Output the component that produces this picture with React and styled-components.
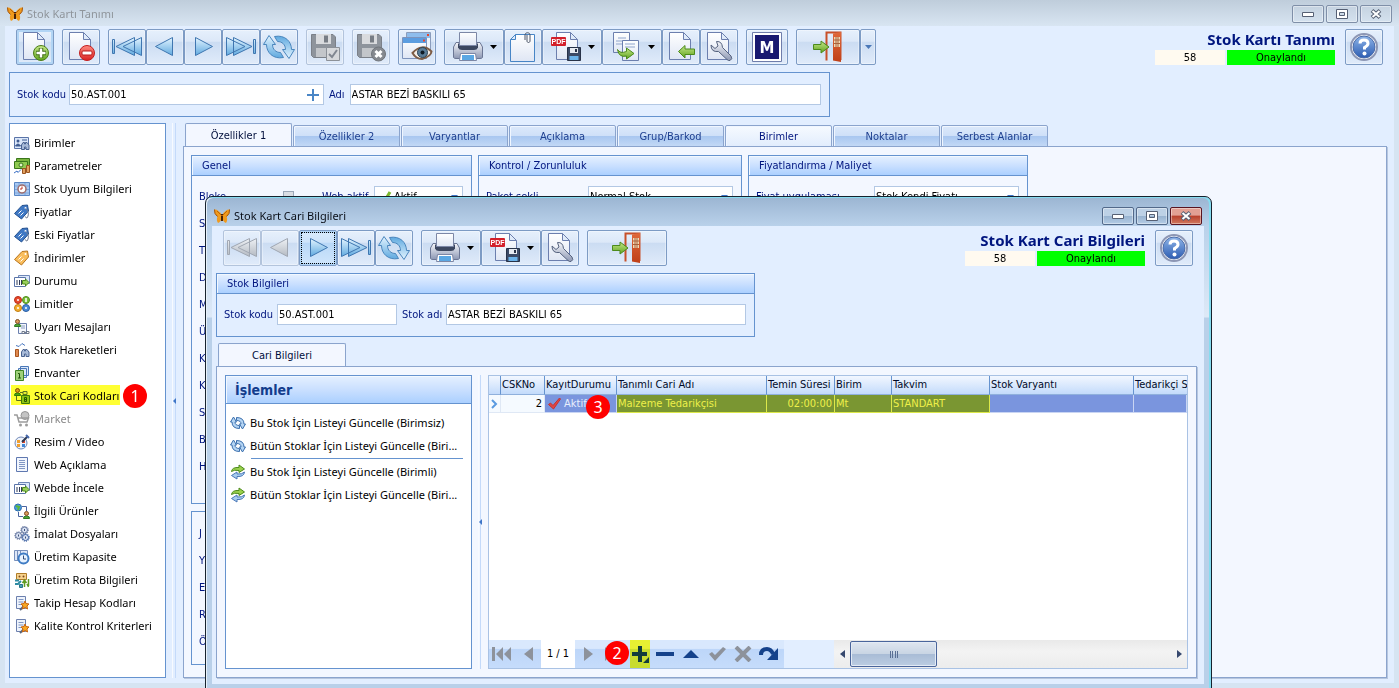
import React, { useState } from 'react';
import styled, { createGlobalStyle, css } from 'styled-components';

const GlobalStyle = createGlobalStyle`
  * {
    box-sizing: border-box;
  }
  html, body, #root {
    height: 100%;
  }
  body {
    --form: 'DejaVu Sans Condensed', 'Noto Sans', sans-serif;
    --list: 'Noto Sans', 'Open Sans', sans-serif;
    --line: #6593cf;
    --navy: #00157f;
    margin: 0;
    overflow: hidden;
    font: 11px/16px var(--form);
    color: var(--navy);
  }
  button, input, select {
    font: inherit;
    color: inherit;
    margin: 0;
    padding: 0;
    border: 0;
    background: none;
  }
  svg {
    display: block;
    flex: none;
  }
`;

/* ---------- windows ---------- */

const MainWindow = styled.div`
  position: relative;
  display: flex;
  flex-direction: column;
  height: 100%;
  padding: 0 5px 5px;
  background: #d6e4f2;
  overflow: hidden;
`;

const TitleBar = styled.header`
  display: flex;
  align-items: center;
  gap: 4px;
  height: 26px;
  margin: 0 -5px;
  padding: 2px 7px 0 7px;
  font: 11px/16px var(--list);
  color: #8f959b;
  background: linear-gradient(#bfcddb, #d8e5f2);
`;

const Client = styled.main`
  flex: 1;
  min-height: 0;
  display: flex;
  flex-direction: column;
  background: #e2eeff;
`;

const Dialog = styled.section`
  position: absolute;
  top: 196px;
  left: 205px;
  right: 187px;
  bottom: -4px;
  display: flex;
  flex-direction: column;
  padding: 0 7px 7px 6px;
  border: 1px solid #16222e;
  border-radius: 7px 7px 0 0;
  background: linear-gradient(#9bb5d2, #b9d1ea 29px, #dde9f7 120px, #b9d0e9 121px);
  box-shadow: inset -2px 1px 0 #86dcf0, inset 1px 1px 0 #e8f1fa;

  ${TitleBar} {
    height: 29px;
    margin: 0 -7px 0 -6px;
    padding: 8px 9px 0 8px;
    color: #0a0f18;
    background: none;
  }
`;

const Caption = styled.span`
  flex: 1;
`;

const WindowButtons = styled.div`
  display: flex;
  gap: 2px;
`;

const WindowButton = styled.button`
  display: grid;
  place-items: center;
  width: 32px;
  height: 18px;
  border: 1px solid #7f8fa8;
  border-radius: 2px;
  box-shadow: inset 0 0 0 1px rgba(255, 255, 255, 0.4);
  ${(props) => props.$strong && css`
    border-color: #52698a;
    background: linear-gradient(#bdd1e6 48%, #98b3d0 50%, #b4cce6);
  `}
  ${(props) => props.$red && css`
    border-color: #5a1420;
    background: linear-gradient(#e2a094 45%, #b8402c 50%, #d17a60);
  `}
`;

/* ---------- toolbar ---------- */

const Toolbar = styled.div`
  display: flex;
  align-items: flex-start;
  gap: 8px;
  padding: ${(props) => (props.$inner ? '4px 11px 7px' : '3px 11px 7px')};
`;

const Group = styled.div`
  display: flex;
`;

const ToolButton = styled.button`
  display: flex;
  align-items: center;
  justify-content: center;
  gap: 6px;
  width: ${(props) => props.$width || 38}px;
  height: 36px;
  border: 1px solid #7d9bc4;
  border-radius: 2px;
  background: linear-gradient(#e6f0fc, #dce8f8 33%, #cbdcf2 36%, #e0ebfa);
  box-shadow: inset 0 0 0 1px rgba(255, 255, 255, 0.35);
  &:disabled {
    border-color: #b3c4dc;
  }
  ${(props) => props.$hot && css`
    box-shadow: inset 0 0 0 2px #b2d5f5;
  `}
  ${(props) => props.$focused && css`
    background: linear-gradient(#d9ebfc, #cde3fa 33%, #b9d8f7 36%, #d0e6fc);
    outline: 1px dotted #000;
    outline-offset: -3px;
  `}
`;

const Status = styled.div`
  display: flex;
  flex-direction: column;
  align-items: flex-end;
  margin-left: auto;
  padding-right: 2px;
`;

const Heading = styled.h1`
  margin: 0;
  font: bold 15px/21px var(--list);
  color: #00157f;
`;

const StatusRow = styled.div`
  display: flex;
  gap: 2px;
  color: #000;
  text-align: center;
  line-height: 15px;
`;

const Count = styled.span`
  width: 70px;
  background: #fffaf0;
`;

const Approved = styled.span`
  width: 108px;
  background: #00ff00;
`;

/* ---------- form parts ---------- */

const Panel = styled.div`
  display: flex;
  align-items: center;
  gap: 5px;
  width: 821px;
  height: 45px;
  margin-left: 4px;
  padding: 0 8px 0 7px;
  border: 1px solid var(--line);
`;

const Label = styled.label`
  flex: none;
  width: ${(props) => (props.$width ? `${props.$width}px` : 'auto')};
  white-space: nowrap;
`;

const Field = styled.span`
  display: flex;
  align-items: center;
  flex: ${(props) => (props.$width ? `0 0 ${props.$width}px` : 1)};
  min-width: 0;
  height: 21px;
  padding: 0 4px 0 1px;
  border: 1px solid #b3c8e4;
  color: #000;
  background: #fff;

  input, select {
    flex: 1;
    min-width: 0;
    appearance: none;
    outline: 0;
  }
`;

const GroupBox = styled.fieldset`
  display: flex;
  flex-direction: column;
  min-width: 0;
  width: ${(props) => (props.$width ? `${props.$width}px` : 'auto')};
  flex: ${(props) => (props.$grow ? 1 : 'none')};
  margin: 0;
  padding: 0;
  border: 1px solid var(--line);
`;

const GroupTitle = styled.div`
  height: 19px;
  padding: 0 9px;
  border: 1px solid #f2f8ff;
  border-width: 1px 0 0 1px;
  box-shadow: 0 1px 0 var(--line);
  line-height: 18px;
  background: linear-gradient(#e3efff, #c9dfff 50%, #abd0ff);
`;

const Rows = styled.div`
  display: flex;
  flex-direction: column;
  gap: 6px;
  padding: 11px 8px 12px 7px;
`;

const Row = styled.div`
  display: flex;
  align-items: center;
  height: 21px;
`;

const Check = styled.input`
  appearance: none;
  width: 11px;
  height: 11px;
  margin: 0 28px 0 30px;
  border: 1px solid #9aa7b8;
  background: #d9dde3;
`;

/* ---------- tabs ---------- */

const TabArea = styled.div`
  flex: 1;
  min-width: 0;
  display: flex;
  flex-direction: column;
`;

const TabStrip = styled.div`
  display: flex;
  align-items: flex-end;
  gap: 1px;
  margin: 0 0 -1px 2px;
`;

const Tab = styled.button`
  width: 107px;
  height: 22px;
  padding-top: 1px;
  border: 1px solid #8ba4cd;
  border-radius: 2px 2px 0 0;
  color: #1e3f8f;
  background: linear-gradient(#dce9fb, #cfe0f8 48%, #a9c7f0 52%, #c2d8f5);
  box-shadow: inset 1px 1px 0 #f0f6ff;
  ${(props) => props.$light && css`
    color: var(--navy);
    background: linear-gradient(#f6faff, #e2edfd);
  `}
  ${(props) => props.$active && css`
    width: ${props.$width}px;
    height: 24px;
    border-bottom: 0;
    color: #000f3c;
    background: #f3f7ff;
  `}
`;

const TabPanel = styled.div`
  flex: 1;
  min-height: 0;
  display: flex;
  padding: 8px 8px 8px 7px;
  border: 1px solid #8ba4cd;
  box-shadow: 1px 1px 0 #b7c6de;
  background: #f3f7ff;
`;

const Column = styled.div`
  display: flex;
  flex-direction: column;
  gap: 7px;
  margin-right: 6px;
  padding-bottom: 4px;
`;

const Splitter = styled.div`
  display: flex;
  align-items: center;
  flex: none;
  width: 4px;
  margin: 0 7px 0 6px;
  border-right: 1px solid #c4dafa;
  border-left: 1px solid #f7faff;
`;

/* ---------- side list ---------- */

const Workspace = styled.div`
  flex: 1;
  min-height: 0;
  display: flex;
  padding: 6px 7px 5px 4px;
`;

const SideList = styled.nav`
  display: flex;
  flex-direction: column;
  width: 157px;
  padding: 7px 1px;
  border: 1px solid var(--line);
  background: #fff;
`;

const SideItem = styled.button`
  position: relative;
  display: flex;
  align-items: center;
  gap: 4px;
  height: 23px;
  padding-left: 3px;
  font: 11px/18px var(--list);
  color: #000;
  white-space: nowrap;
  &:disabled {
    color: #8a8a8a;
  }
  ${(props) => props.$marked && css`
    background: linear-gradient(#ffff33, #ffff33) 0 1px / 109px 20px no-repeat;
    svg {
      mix-blend-mode: multiply;
    }
  `}
`;

const Marker = styled.b`
  position: absolute;
  left: ${(props) => props.$left}px;
  top: ${(props) => props.$top}px;
  width: 24px;
  height: 24px;
  border-radius: 12px;
  font: 16px/24px var(--list);
  text-align: center;
  color: #fff;
  background: #ff0000;
  z-index: 1;
`;

/* ---------- dialog content ---------- */

const DialogBody = styled(Client)`
  padding: 0 7px 6px 4px;
  ${Toolbar} {
    margin: 0 -7px 0 -4px;
  }
  ${TabPanel} {
    padding: 8px;
  }
  ${Splitter} {
    width: 3px;
  }
`;

const Actions = styled(GroupBox)`
  width: 247px;
  background: #fff;
`;

const ActionsTitle = styled(GroupTitle)`
  height: 27px;
  padding: 0 8px;
  font: bold 14px/26px var(--form);
  color: #123c8c;
`;

const ActionList = styled.div`
  display: flex;
  flex-direction: column;
  padding: 8px 8px 0 1px;
  hr {
    width: 212px;
    height: 1px;
    margin: 1px 0 1px auto;
    border: 0;
    background: var(--line);
  }
`;

const GridBox = styled.div`
  position: relative;
  flex: 1;
  min-width: 0;
  display: flex;
  flex-direction: column;
  border: 1px solid #a9c2e4;
  background: #fff;
  overflow: hidden;
`;

const Table = styled.table`
  width: 100%;
  table-layout: fixed;
  border-collapse: separate;
  border-spacing: 0;
`;

const Th = styled.th`
  width: ${(props) => (props.$width ? `${props.$width}px` : 'auto')};
  height: 19px;
  padding: 0 0 0 1px;
  border-right: 1px solid var(--line);
  border-bottom: 1px solid #8fb0dc;
  font-weight: normal;
  text-align: left;
  white-space: nowrap;
  overflow: hidden;
  color: #000a28;
  background: linear-gradient(#f2f7ff, #dbe9fd 50%, #c3dbfb);
  &:last-child {
    border-right: 0;
  }
`;

const tones = {
  plain: css`
    color: #000;
    background: #f5faff;
    border-color: #dfe8f5;
  `,
  selected: css`
    color: #e9effd;
    background: #7a95de;
    border-color: #c9d5f3;
  `,
  marked: css`
    color: #eef04a;
    background: #7a9632;
    border-color: #dce84a;
  `,
};

const Td = styled.td`
  height: 18px;
  padding: 0 2px 0 1px;
  border-right: 1px solid;
  border-bottom: 1px solid;
  text-align: ${(props) => (props.$right ? 'right' : 'left')};
  white-space: nowrap;
  overflow: hidden;
  ${(props) => tones[props.$tone]}
`;

const StateCell = styled.div`
  display: flex;
  align-items: center;
  gap: 3px;
  padding-left: 2px;
`;

const GridFooter = styled.div`
  display: flex;
  height: 28px;
  margin-top: auto;
  background: #e2eeff;
`;

const Navigator = styled.div`
  position: relative;
  display: flex;
  width: 295px;
  margin-right: 50px;
  background: linear-gradient(#d9e8fd 30%, #bdd6f9 34%, #c6dcfb);
`;

const NavButton = styled.button`
  display: grid;
  place-items: center;
  width: 26px;
  ${(props) => props.$marked && css`
    width: 20px;
    margin: 0 2px 0 3px;
    background: linear-gradient(#e6f032 30%, #c8dc2e 34%);
  `}
`;

const Position = styled.span`
  width: 34px;
  text-align: center;
  line-height: 27px;
  color: #000;
  background: #fff;
`;

const ScrollBar = styled.div`
  flex: 1;
  display: flex;
  align-items: center;
  background: linear-gradient(#e9e9e9, #f3f3f3 40%, #ececec);
`;

const ScrollArrow = styled.button`
  display: grid;
  place-items: center;
  width: 16px;
  height: 27px;
`;

const Thumb = styled.div`
  display: grid;
  place-items: center;
  width: 87px;
  height: 26px;
  margin-right: auto;
  border: 1px solid #4a659b;
  border-radius: 2px;
  background: linear-gradient(#dfe6ef, #c9d5e4 48%, #a9bcd6 52%, #bccde2);
  box-shadow: inset 0 0 0 1px #e3ebf5;
`;

/* ---------- toolbar icons ---------- */

const Gradient = ({ id, from, to }) => (
  <linearGradient id={id} x1="0" y1="0" x2="0" y2="1">
    <stop offset="0" stopColor={from} />
    <stop offset="1" stopColor={to} />
  </linearGradient>
);

const HiddenSvg = styled.svg`
  position: absolute;
`;

const Defs = () => (
  <HiddenSvg width="0" height="0" aria-hidden="true">
    <defs>
      <Gradient id="blue" from="#e3f4ff" to="#5fa9df" />
      <Gradient id="gray" from="#eef1f5" to="#b4bac2" />
      <Gradient id="green" from="#c6e88a" to="#5fa31d" />
      <Gradient id="red" from="#ff8b80" to="#d92323" />
      <Gradient id="paper" from="#ffffff" to="#dfe6f4" />
      <Gradient id="silver" from="#f6f7fb" to="#8c97b3" />
      <Gradient id="help" from="#8fb5e8" to="#2c5cb2" />
      <Gradient id="door" from="#e0693a" to="#bf3f17" />
    </defs>
  </HiddenSvg>
);

const Icon = ({ size = 32, children }) => (
  <svg width={size} height={size} viewBox={`0 0 ${size} ${size}`} fill="none" aria-hidden="true">
    {children}
  </svg>
);

const Sheet = () => (
  <path d="M4.500 1.500H18.500L25.500 8.500V28.500H4.500ZM18.500 1.500V8.500H25.500" fill="url(#paper)" stroke="#6c7fae" strokeLinejoin="round" />
);

const AddIcon = () => (
  <Icon>
    <Sheet />
    <circle cx="22" cy="22" r="7.500" fill="url(#green)" stroke="#4c7d17" />
    <path d="M22 17v10M17 22h10" stroke="#3f6d12" strokeWidth="4.500" />
    <path d="M22 17.500v9M17.500 22h9" stroke="#fff" strokeWidth="2.500" />
  </Icon>
);

const RemoveIcon = () => (
  <Icon>
    <Sheet />
    <circle cx="22" cy="22" r="7.500" fill="url(#red)" stroke="#c31f1f" />
    <rect x="17" y="20" width="10" height="4" rx="1" fill="#fff" stroke="#b81a1a" />
  </Icon>
);

const arrowPaths = {
  first: 'M1.500 8.500h2v14h-2ZM23.500 6.500v18L5 15.500ZM30.500 6.500v18L12 15.500Z',
  prev: 'M23.500 6.500v18L6.500 15.500Z',
  next: 'M8.500 6.500v18L25.500 15.500Z',
  last: 'M28.500 8.500h2v14h-2ZM1.500 6.500v18L20 15.500ZM8.500 6.500v18L27 15.500Z',
};

const ArrowIcon = ({ kind, muted }) => (
  <Icon>
    <path
      d={arrowPaths[kind]}
      fill={muted ? 'url(#gray)' : 'url(#blue)'}
      stroke={muted ? '#a0a7b2' : '#3f76b0'}
      strokeLinejoin="round"
    />
  </Icon>
);

const refreshHalf = 'M6 4.500L.5 13.500H3.500C3.500 21.500 10 28.500 20.500 26.500L17.500 21.500C13 21.500 9.500 18.500 9.500 13.500H12.500Z';

const RefreshIcon = () => (
  <Icon>
    <g fill="url(#blue)" stroke="#4a86bd" strokeLinejoin="round">
      <path d={refreshHalf} />
      <path d={refreshHalf} transform="rotate(180 16 16)" />
    </g>
  </Icon>
);

const Disk = () => (
  <>
    <path d="M2.500 3.500H24L26.500 6V26.500H4.500L2.500 24.500Z" fill="#8e949c" stroke="#7b8088" />
    <path d="M7 3h15v10H7Z" fill="#d9dbde" />
    <path d="M15 4.500h4v7h-4Z" fill="#777d85" />
    <path d="M7 17h15v9H7Z" fill="#c3c6ca" />
  </>
);

const SaveIcon = () => (
  <Icon>
    <Disk />
    <path d="M17.500 16.500h13v13h-13Z" fill="#d6d8db" stroke="#8c9198" />
    <path d="M20 23l3 3 5-7" stroke="#808690" strokeWidth="2" />
  </Icon>
);

const CancelIcon = () => (
  <Icon>
    <Disk />
    <circle cx="23.500" cy="23" r="7" fill="#85898f" stroke="#6f747b" />
    <path d="M20.500 20l6 6M26.500 20l-6 6" stroke="#fff" strokeWidth="3" />
  </Icon>
);

const PreviewIcon = () => (
  <Icon>
    <path d="M5.500 1.500h24v18h-24Z" fill="#eef4fc" stroke="#8a9cbc" />
    <path d="M6 2h23v5H6Z" fill="#8fbdec" />
    <path d="M1.500 6.500h24v21h-24Z" fill="url(#paper)" stroke="#7e93bb" />
    <path d="M2 7h23v5H2Z" fill="#5c9de0" />
    <path d="M26 3h2v2h-2ZM22 8.500h2v2h-2Z" fill="#e8452c" />
    <path d="M11.500 22Q21 11.500 30.500 20.500Q30 25.500 21 28Q15 28 11.500 22Z" fill="#f4ede6" stroke="#7d5c45" strokeWidth="2" />
    <circle cx="21.500" cy="21.500" r="5" fill="#5a7d99" stroke="#2b4254" />
    <circle cx="21.500" cy="21.500" r="2" fill="#0e1a24" />
  </Icon>
);

const PrintIcon = () => (
  <Icon>
    <path d="M4 11.500H28L30.500 16V26.500Q30 27.500 28 27.500H4Q2 27.500 1.500 26.500V16Z" fill="url(#silver)" stroke="#6b7694" />
    <path d="M6 12.500h20v4Q25 19 22 19H10Q7 19 6 16.500Z" fill="#3c4760" />
    <path d="M7.500 1.500h17v13h-17Z" fill="url(#paper)" stroke="#7c87a6" />
    <path d="M8.500 22.500h15l1 7h-17Z" fill="#fff" stroke="#7c87a6" />
    <path d="M10 24h12v5H10Z" fill="#5ba7e3" />
  </Icon>
);

const ClipIcon = () => (
  <Icon>
    <path d="M8.500 3.500H27.500V30.500H3.500V8.500ZM3.500 8.500H8.500V3.500" fill="url(#paper)" stroke="#4785c6" />
    <path d="M18 9V4c0-3 5-3 5 0v6c0 2-3 2-3 0V4" stroke="#4b5568" />
  </Icon>
);

const FloppySmall = () => (
  <>
    <path d="M17.500 16.500h13v13h-13Z" fill="#3c4a66" stroke="#283349" />
    <path d="M20 17h8v5h-8Z" fill="#e6eaf1" />
    <path d="M25 18h2v3h-2Z" fill="#283349" />
    <path d="M19.500 25h9v4h-9Z" fill="#6bb3ea" />
  </>
);

const PdfIcon = () => (
  <Icon>
    <path d="M6.500 1.500H20.500L27.500 8.500V28.500H6.500ZM20.500 1.500V8.500H27.500" fill="url(#paper)" stroke="#6c7fae" />
    <rect x="1" y="6" width="15" height="9" rx="1" fill="#d3202a" />
    <text x="8.500" y="13" textAnchor="middle" fontFamily="Liberation Sans" fontWeight="bold" fontSize="7" fill="#fff">PDF</text>
    <FloppySmall />
  </Icon>
);

const CopyIcon = () => (
  <Icon>
    <path d="M3.500 1.500h16v20h-16Z" fill="url(#paper)" stroke="#6c7fae" />
    <path d="M8 7h8M6 10h10M6 13h8" stroke="#8fa4cc" />
    <path d="M12.500 9.500h16v20h-16Z" fill="url(#paper)" stroke="#6c7fae" />
    <path d="M15 13h10M15 16h10M15 25h6" stroke="#8fa4cc" />
    <path d="M7.500 18.500Q10 23 16.500 20.500V17L24 22.500L16.500 28V25Q9 27 7.500 18.500Z" fill="url(#green)" stroke="#4c8a1b" />
  </Icon>
);

const ImportIcon = () => (
  <Icon>
    <Sheet />
    <path d="M13.500 20.500L20 14.500V18H29.500V23.500H20V27Z" fill="url(#green)" stroke="#4c8a1b" />
  </Icon>
);

const WrenchIcon = () => (
  <Icon>
    <Sheet />
    <path
      d="M8 14L12 17.500L15 15L13.500 10.500Q19 10 19.500 16.500L28 25Q30 28 27 29.500Q25.500 30 24 28.500L15.500 20.500Q8 21.500 8 14Z"
      fill="url(#silver)"
      stroke="#56637f"
      strokeLinejoin="round"
    />
  </Icon>
);

const MIcon = () => (
  <Icon>
    <path d="M1.500 1.500h29v29h-29Z" fill="#fff" stroke="#6f7dab" />
    <path d="M4 4h24v24H4Z" fill="#191970" />
    <text x="16" y="22" textAnchor="middle" fontFamily="DejaVu Sans" fontWeight="bold" fontSize="15" fill="#fff">M</text>
  </Icon>
);

const ExitIcon = () => (
  <Icon>
    <path d="M14.500 29.500V1.500H28.500V29" stroke="#c8502a" strokeWidth="2" />
    <path d="M21 2.500L29 1V31L21 29.500Z" fill="url(#door)" />
    <path d="M22 6h6v10h-6Z" fill="#f3d9b4" />
    <path d="M24 6v10M26 6v10M22 9h6M22 12.500h6" stroke="#a9623c" />
    <path d="M1.500 13.500H9V10L17 16L9 22V18.500H1.500Z" fill="url(#green)" stroke="#4c8a1b" />
  </Icon>
);

const HelpIcon = () => (
  <Icon>
    <circle cx="16" cy="16" r="13" fill="#fff" stroke="#8c96b4" strokeWidth="2" />
    <circle cx="16" cy="16" r="11" fill="url(#help)" stroke="#4a6ba8" />
    <path d="M12 12.500Q12 9 16 9T20 12.500Q20 14.500 16.500 16.500V18.500" stroke="#fff" strokeWidth="3" />
    <circle cx="16.500" cy="22.500" r="2" fill="#fff" />
  </Icon>
);

const Butterfly = () => (
  <Icon size={16}>
    <path d="M8 7Q4 1 .5 1.500Q0 6 3.500 8.500Q2 12 4 15Q7 14 8 9Q9 14 12 15Q14 12 12.500 8.500Q16 6 15.500 1.500Q12 1 8 7Z" fill="#f09a1c" />
    <path d="M.5 1.500Q0 6 3.500 8.500M15.500 1.500Q16 6 12.500 8.500" stroke="#a0500a" />
    <path d="M8 6v7" stroke="#4a2408" strokeWidth="2" />
    <path d="M8 8L3 3M8 8l5-5" stroke="#b8640c" />
  </Icon>
);

const Caret = ({ color = '#000' }) => (
  <svg width="7" height="4" viewBox="0 0 7 4" aria-hidden="true">
    <path d="M0 0h7L3.500 4Z" fill={color} />
  </svg>
);

const PlusSign = () => (
  <svg width="12" height="12" viewBox="0 0 12 12" aria-hidden="true">
    <path d="M6 0v12M0 6h12" stroke="#4a86c6" strokeWidth="2" />
  </svg>
);

const SplitArrow = () => (
  <svg width="3" height="6" viewBox="0 0 3 6" aria-hidden="true">
    <path d="M3 0v6L0 3Z" fill="#3f76c8" />
  </svg>
);

/* ---------- list icons ---------- */

const Binoculars = () => (
  <path d="M7.500 14.500V10L9 7.500h1.500V9h1V7.500H13L15 10v4.500h-3V12h-1.500v2.500Z" fill="#a9bbd8" stroke="#4a6390" />
);

const Person = ({ x = 0, y = 0 }) => (
  <g transform={`translate(${x} ${y})`}>
    <path d="M.5 7.500Q0 5 3.500 5T6.500 7.500Z" fill="#4fa83a" stroke="#2f7a24" />
    <circle cx="3.500" cy="2.500" r="2" fill="#d99a5b" stroke="#7c4a20" />
  </g>
);

const Tag = ({ fill, stroke }) => (
  <>
    <path d="M.5 9.500L8 1.500L13.500 1L14.500 7L7.500 15Z" fill={fill} stroke={stroke} strokeLinejoin="round" />
    <circle cx="11.500" cy="4" r="1" fill="#fff" />
    <path d="M4.500 9.500l3-3M6.500 11.500l3-3" stroke="#fff" />
  </>
);

const Barcode = () => (
  <>
    <path d="M4.500 2.500h11v8h-11Z" fill="#dce8fa" stroke="#7088b8" />
    <path d="M.5 4.500h11v9H.5Z" fill="#fff" stroke="#5a74a8" />
    <path d="M3 7v5M5.500 7v5M7.500 7v5" stroke="#303c58" />
    <path d="M8.500 7.500h3V6l3.500 3.500L11.500 13v-2h-3Z" fill="#9ad05c" stroke="#4c8a1b" />
  </>
);

const Note = () => (
  <>
    <path d="M2.500 1.500h9v12h-9Z" fill="#eef3fb" stroke="#6c80ae" />
    <path d="M4.500 4.500h5M4.500 7h5M4.500 9.500h3" stroke="#7f96c4" />
    <path d="M6 15l4-4" stroke="#5a6478" strokeWidth="2" />
    <path d="M11 6l1 2.500 3 .5-2 2 .5 3-2.500-1.500L8.500 14 9 11 7 9l3-.5Z" fill="#f7a823" stroke="#c8640f" />
  </>
);

const syncHalf = 'M3.500 2L.5 7H2Q2 13.500 9.500 13.500V10.500Q5 10.500 5 7H6.500Z';

const listIcons = {
  units: (
    <>
      <path d="M.5 2.500h14v11H.5Z" fill="#dbe7f9" stroke="#5a74a8" />
      <circle cx="4" cy="6" r="1.500" fill="#3d5a90" />
      <path d="M1.500 11q2.500-4 5 0ZM8 5h5" fill="#3d5a90" stroke="#3d5a90" />
      <Binoculars />
    </>
  ),
  params: (
    <>
      <path d="M2.500.5h13v7h-13Z" fill="#79b53e" stroke="#39761a" />
      <path d="M.5 3.500h13v7H.5Z" fill="#8fca50" stroke="#39761a" />
      <circle cx="7" cy="7" r="2" fill="#e4f4c8" stroke="#39761a" />
      <path d="M0 15l3-2 1 1.500 3-3" stroke="#3a6fc4" />
      <path d="M8.500 10.500h3v5h-3ZM12.500 7.500h3v7h-3Z" fill="#e0a060" stroke="#9a5420" />
    </>
  ),
  match: (
    <>
      <path d="M.5 1.500h15v13H.5Z" fill="#a9c9f2" stroke="#5a86c4" />
      <path d="M1 5h14M1 8.500h14M1 12h14M5 2v12M11 2v12" stroke="#7fa5d8" />
      <circle cx="8" cy="8" r="4" fill="#fff" stroke="#9c6a6a" strokeWidth="1.500" />
      <path d="M8 5.500V8H6" stroke="#c03020" />
    </>
  ),
  prices: (
    <>
      <Tag fill="#3f78c4" stroke="#23508f" />
      <path d="M11.500 4.500Q16 8 13.500 13.500q-1.500 1.500-2-1" stroke="#6f7a90" />
    </>
  ),
  discount: <Tag fill="#f9bd5c" stroke="#b8741c" />,
  state: <Barcode />,
  limits: (
    <>
      <circle cx="4" cy="4" r="3.500" fill="#e84a2c" stroke="#b82c14" />
      <circle cx="12" cy="4" r="3.500" fill="#7bbf3a" stroke="#4c8a1b" />
      <circle cx="4" cy="12" r="3.500" fill="#f5b030" stroke="#c07c10" />
      <circle cx="12" cy="12" r="3.500" fill="#4a8cd8" stroke="#2a5ca0" />
      <path d="M3 4h2M12 2v4M3 12h2M11 12h2" stroke="#fff" strokeWidth="1.500" />
    </>
  ),
  alerts: (
    <>
      <path d="M4.500 4.500h8v10h-8Z" fill="#f4f7fc" stroke="#6c80ae" />
      <path d="M7 7h4M7 9h4" stroke="#8b9cc0" />
      <Person />
      <path d="M8 12.500h2.500v2H8ZM12 12.500h3v2h-3ZM10 13.500h2" stroke="#707a8c" />
    </>
  ),
  moves: (
    <>
      <path d="M2 3.500l3 1 3-3 3 2" stroke="#4a78c0" />
      <path d="M1.500 7.500h3v7h-3Z" fill="#e08a50" stroke="#a85520" />
      <Binoculars />
    </>
  ),
  stock: (
    <>
      <path d="M6.500 1.500h8v9h-8ZM4.500 3.500h8v9h-8Z" fill="#dbe7f9" stroke="#4a78b8" />
      <path d="M1.500 5.500h8v10h-8Z" fill="#9ed07a" stroke="#3f8424" />
      <path d="M4 8.500h1.500V13M4 13h3" stroke="#24580f" />
    </>
  ),
  codes: (
    <>
      <Person />
      <path d="M2.500 8v4.500H8M6 4.500h4" stroke="#5a6f9c" />
      <path d="M9 3.500h4v3H9Z" fill="#e8eefa" stroke="#5a74a8" />
      <path d="M7.500 7.500h8v8h-8Z" fill="#8fc45c" stroke="#3f7a20" />
      <path d="M10.500 9.500h2v4h-2ZM10.500 11.500h2" stroke="#24580f" />
    </>
  ),
  market: (
    <>
      <circle cx="11" cy="4.500" r="4" fill="#c4c4c4" stroke="#959595" />
      <path d="M0 4h3l2 7h8l1.500-4H4" stroke="#9c9c9c" strokeWidth="1.500" />
      <circle cx="6.500" cy="14" r="1.500" fill="#9c9c9c" />
      <circle cx="12.500" cy="14" r="1.500" fill="#9c9c9c" />
    </>
  ),
  media: (
    <>
      <circle cx="7" cy="9" r="6" fill="#eef3fb" stroke="#7088b8" />
      <path d="M3 6h3v3H3Z" fill="#f0a030" />
      <path d="M8 6h3v3H8Z" fill="#e0462c" />
      <path d="M3 10h3v3H3Z" fill="#f0a030" />
      <path d="M8 10h3v3H8Z" fill="#3f86d8" />
      <path d="M8 8l6-6" stroke="#2e3a52" strokeWidth="2" />
      <path d="M12 1l3 3" stroke="#4a6cb0" strokeWidth="2" />
    </>
  ),
  text: (
    <>
      <path d="M2.500.5h11v14h-11Z" fill="#f2f6fd" stroke="#5f78b0" />
      <path d="M5 3.500h6M5 5.500h6M5 7.500h6M5 9.500h6M5 11.500h6" stroke="#8197c4" />
    </>
  ),
  web: <Barcode />,
  related: (
    <>
      <circle cx="4" cy="4.500" r="3.500" fill="#4a9ce0" stroke="#2c6cae" />
      <path d="M2 3l3 1-1 3" stroke="#5cb838" strokeWidth="2" />
      <path d="M8 3.500h4.500V8M4.500 9v4.500H9" stroke="#4a64a0" />
      <Person x={9} y={8} />
    </>
  ),
  gears: (
    <g stroke="#6d7ea4" fill="#d9e2f2">
      <circle cx="10.500" cy="4" r="3" />
      <circle cx="4.500" cy="9.500" r="3" />
      <circle cx="11.500" cy="11.500" r="3" stroke="#4a6ca8" />
      <g strokeWidth="1.500" strokeDasharray="1 1" fill="none">
        <circle cx="10.500" cy="4" r="3.500" />
        <circle cx="4.500" cy="9.500" r="3.500" />
        <circle cx="11.500" cy="11.500" r="3.500" stroke="#4a6ca8" />
      </g>
      <path d="M10 4h1M4 9.500h1M11 11.500h1" stroke="#3d4f78" strokeWidth="2" />
    </g>
  ),
  capacity: (
    <>
      <path d="M.5 1.500h13v10H.5Z" fill="#dfe8f8" stroke="#7890bc" />
      <path d="M3.500 2v9M6.500 2v9" stroke="#7890bc" />
      <circle cx="9.500" cy="9.500" r="5" fill="#e8f3ff" stroke="#3f7cc4" strokeWidth="2" />
      <path d="M9.500 6.500v3.500H12" stroke="#304a78" />
    </>
  ),
  route: (
    <>
      <path d="M2.500 1.500h10v6h-10Z" fill="#f7d28c" stroke="#b07c28" />
      <circle cx="5.500" cy="4.500" r="1" fill="#7c4a20" />
      <circle cx="9.500" cy="4.500" r="1" fill="#7c4a20" />
      <path d="M1 8.500h4M1 12h3l3-3" stroke="#2f8ca4" strokeWidth="2" />
      <path d="M5.500 15.500v-3h3v3Z" fill="#4aa0b8" stroke="#27748a" />
      <path d="M10.500 15V9M8.500 11l2-3 2 3M14.500 7v7M13 12l1.500 3" stroke="#5f9c24" strokeWidth="1.500" />
    </>
  ),
  note: <Note />,
  syncBlue: (
    <g fill="#b4d4f3" stroke="#3a6fae">
      <path d={syncHalf} />
      <path d={syncHalf} transform="rotate(180 8 8)" />
    </g>
  ),
  syncGreen: (
    <>
      <path d="M1.500 7.500Q2 3 9 3.500V1l5.500 4L9 8.500V6.500Q4 5.500 1.500 7.500Z" fill="#9ad04c" stroke="#4c8a1b" />
      <path d="M14.500 8Q14 13 7 12.500V15L1.500 11.500 7 8v2Q12 10.500 14.500 8Z" fill="#a8cdf0" stroke="#4a78b8" />
    </>
  ),
};

const sideItems = [
  ['Birimler', 'units'],
  ['Parametreler', 'params'],
  ['Stok Uyum Bilgileri', 'match'],
  ['Fiyatlar', 'prices'],
  ['Eski Fiyatlar', 'prices'],
  ['İndirimler', 'discount'],
  ['Durumu', 'state'],
  ['Limitler', 'limits'],
  ['Uyarı Mesajları', 'alerts'],
  ['Stok Hareketleri', 'moves'],
  ['Envanter', 'stock'],
  ['Stok Cari Kodları', 'codes'],
  ['Market', 'market'],
  ['Resim / Video', 'media'],
  ['Web Açıklama', 'text'],
  ['Webde İncele', 'web'],
  ['İlgili Ürünler', 'related'],
  ['İmalat Dosyaları', 'gears'],
  ['Üretim Kapasite', 'capacity'],
  ['Üretim Rota Bilgileri', 'route'],
  ['Takip Hesap Kodları', 'note'],
  ['Kalite Kontrol Kriterleri', 'note'],
];

const tabNames = ['Özellikler 1', 'Özellikler 2', 'Varyantlar', 'Açıklama', 'Grup/Barkod', 'Birimler', 'Noktalar', 'Serbest Alanlar'];

const columns = [
  ['', 12],
  ['CSKNo', 44],
  ['KayıtDurumu', 72],
  ['Tanımlı Cari Adı', 150],
  ['Temin Süresi', 68],
  ['Birim', 57],
  ['Takvim', 98],
  ['Stok Varyantı', 144],
  ['Tedarikçi Sı'],
];

const ControlButtons = ({ strong }) => (
  <WindowButtons>
    <WindowButton $strong={strong} aria-label="Simge durumuna küçült">
      <svg width="12" height="6" viewBox="0 0 12 6"><path d="M.5 1.500h11v4H.5Z" fill="#fff" stroke="#566074" /></svg>
    </WindowButton>
    <WindowButton $strong={strong} aria-label="Ekranı kapla">
      <svg width="12" height="10" viewBox="0 0 12 10">
        <path d="M.5.500h11v9H.5ZM3.500 3.500h5v3h-5Z" fill="#fff" fillRule="evenodd" stroke="#566074" />
      </svg>
    </WindowButton>
    <WindowButton $strong={strong} $red={strong} aria-label="Kapat">
      <svg width="12" height="10" viewBox="0 0 12 10">
        <path d="M2 1.500l8 7M10 1.500l-8 7" stroke="#566074" strokeWidth="4" />
        <path d="M2.500 2l7 6M9.500 2l-7 6" stroke="#fff" strokeWidth="2" />
      </svg>
    </WindowButton>
  </WindowButtons>
);

const StatusBlock = ({ title }) => (
  <>
    <Status>
      <Heading>{title}</Heading>
      <StatusRow>
        <Count>58</Count>
        <Approved>Onaylandı</Approved>
      </StatusRow>
    </Status>
    <ToolButton aria-label="Yardım"><HelpIcon /></ToolButton>
  </>
);

const LetterRows = ({ letters }) => letters.map((letter, index) => (
  <Row key={`${letter}${index}`}><Label>{letter}</Label></Row>
));

const MainToolbar = () => (
  <Toolbar>
    <ToolButton $hot aria-label="Yeni"><AddIcon /></ToolButton>
    <ToolButton aria-label="Sil"><RemoveIcon /></ToolButton>
    <Group>
      <ToolButton aria-label="İlk"><ArrowIcon kind="first" /></ToolButton>
      <ToolButton aria-label="Önceki"><ArrowIcon kind="prev" /></ToolButton>
      <ToolButton aria-label="Sonraki"><ArrowIcon kind="next" /></ToolButton>
      <ToolButton aria-label="Son"><ArrowIcon kind="last" /></ToolButton>
      <ToolButton aria-label="Yenile"><RefreshIcon /></ToolButton>
    </Group>
    <ToolButton disabled aria-label="Kaydet"><SaveIcon /></ToolButton>
    <ToolButton disabled aria-label="Vazgeç"><CancelIcon /></ToolButton>
    <ToolButton aria-label="Önizle"><PreviewIcon /></ToolButton>
    <Group>
      <ToolButton $width={60} aria-label="Yazdır"><PrintIcon /><Caret /></ToolButton>
      <ToolButton aria-label="Ekler"><ClipIcon /></ToolButton>
      <ToolButton $width={60} aria-label="PDF"><PdfIcon /><Caret /></ToolButton>
      <ToolButton $width={60} aria-label="Kopyala"><CopyIcon /><Caret /></ToolButton>
      <ToolButton aria-label="Aktar"><ImportIcon /></ToolButton>
      <ToolButton aria-label="Ayarlar"><WrenchIcon /></ToolButton>
    </Group>
    <ToolButton $width={42} aria-label="M"><MIcon /></ToolButton>
    <Group>
      <ToolButton $width={64} aria-label="Çıkış"><ExitIcon /></ToolButton>
      <ToolButton $width={16} aria-label="Çıkış seçenekleri"><Caret color="#4a78b8" /></ToolButton>
    </Group>
    <StatusBlock title="Stok Kartı Tanımı" />
  </Toolbar>
);

const FeatureTabs = () => {
  const [active, setActive] = useState(0);

  return (
    <TabArea>
      <TabStrip role="tablist">
        {tabNames.map((name, index) => (
          <Tab
            key={name}
            role="tab"
            $active={index === active}
            $width={107}
            $light={index === 5}
            onClick={() => setActive(index)}
          >
            {name}
          </Tab>
        ))}
      </TabStrip>
      <TabPanel>
        <Column>
          <GroupBox $width={281} $grow>
            <GroupTitle>Genel</GroupTitle>
            <Rows>
              <Row>
                <Label htmlFor="bloke" $width={54}>Bloke</Label>
                <Check id="bloke" type="checkbox" />
                <Label htmlFor="web" $width={52}>Web aktif</Label>
                <Field>
                  <svg width="18" height="16" viewBox="0 0 18 16"><path d="M5 9l3 4 6-10" stroke="#7cb82c" strokeWidth="3" fill="none" /></svg>
                  <select id="web"><option>Aktif</option></select>
                  <Caret color="#3f76c8" />
                </Field>
              </Row>
              <LetterRows letters={['S', 'T', 'D', 'M', 'Ü', 'K', 'K', 'S', 'B', 'H']} />
            </Rows>
          </GroupBox>
          <GroupBox $width={281}>
            <Rows>
              <LetterRows letters={['J', 'Y', 'E', 'R', 'Ö']} />
            </Rows>
          </GroupBox>
        </Column>
        <Column>
          <GroupBox $width={264} $grow>
            <GroupTitle>Kontrol / Zorunluluk</GroupTitle>
            <Rows>
              <Row>
                <Label htmlFor="paket" $width={102}>Paket şekli</Label>
                <Field>
                  <select id="paket"><option>Normal Stok</option></select>
                  <Caret color="#3f76c8" />
                </Field>
              </Row>
            </Rows>
          </GroupBox>
        </Column>
        <Column>
          <GroupBox $width={280} $grow>
            <GroupTitle>Fiyatlandırma / Maliyet</GroupTitle>
            <Rows>
              <Row>
                <Label htmlFor="fiyat" $width={118}>Fiyat uygulaması</Label>
                <Field>
                  <select id="fiyat"><option>Stok Kendi Fiyatı</option></select>
                  <Caret color="#3f76c8" />
                </Field>
              </Row>
            </Rows>
          </GroupBox>
        </Column>
      </TabPanel>
    </TabArea>
  );
};

const SupplierGrid = () => (
  <GridBox>
    <Table>
      <thead>
        <tr>
          {columns.map(([name, width]) => <Th key={name} $width={width}>{name}</Th>)}
        </tr>
      </thead>
      <tbody>
        <tr>
          <Td $tone="plain">
            <svg width="8" height="12" viewBox="0 0 8 12"><path d="M2 2l4 4-4 4" stroke="#5a9ae0" strokeWidth="2" fill="none" /></svg>
          </Td>
          <Td $tone="plain" $right>2</Td>
          <Td $tone="selected">
            <StateCell>
              <svg width="13" height="13" viewBox="0 0 13 13"><path d="M.5 7.500L2.500 6 5 8.500 11.500 1 12.500 2 5.500 12Z" fill="#e24444" stroke="#c03434" /></svg>
              Aktif
            </StateCell>
          </Td>
          <Td $tone="marked">Malzeme Tedarikçisi</Td>
          <Td $tone="marked" $right>02:00:00</Td>
          <Td $tone="marked">Mt</Td>
          <Td $tone="marked">STANDART</Td>
          <Td $tone="selected" />
          <Td $tone="selected" />
        </tr>
      </tbody>
    </Table>
    <Marker $left={97} $top={19}>3</Marker>
    <GridFooter>
      <Navigator>
        <NavButton aria-label="İlk kayıt">
          <svg width="20" height="16" viewBox="0 0 20 16"><path d="M0 1h3v14H0ZM11 1v14L4 8ZM19 1v14L12 8Z" fill="#8d929b" /></svg>
        </NavButton>
        <NavButton aria-label="Önceki kayıt">
          <svg width="9" height="16" viewBox="0 0 9 16"><path d="M9 1v14L0 8Z" fill="#8d929b" /></svg>
        </NavButton>
        <Position>1 / 1</Position>
        <NavButton aria-label="Sonraki kayıt">
          <svg width="9" height="16" viewBox="0 0 9 16"><path d="M0 1v14L9 8Z" fill="#8d929b" /></svg>
        </NavButton>
        <NavButton aria-label="Son kayıt">
          <svg width="19" height="16" viewBox="0 0 19 16"><path d="M19 1h-3v14h3ZM8 1v14l7-7ZM0 1v14l7-7Z" fill="#8d929b" /></svg>
        </NavButton>
        <NavButton $marked aria-label="Ekle">
          <svg width="18" height="20" viewBox="0 0 18 20"><path d="M7 2h4v6h5v4h-5v6H7v-6H1V8h6ZM18 13v6h-6Z" fill="#123c3c" /></svg>
        </NavButton>
        <NavButton aria-label="Çıkar">
          <svg width="18" height="4" viewBox="0 0 18 4"><path d="M0 0h18v4H0Z" fill="#15428b" /></svg>
        </NavButton>
        <NavButton aria-label="Düzenle">
          <svg width="16" height="8" viewBox="0 0 16 8"><path d="M8 0l8 8H0Z" fill="#15428b" /></svg>
        </NavButton>
        <NavButton aria-label="Onayla">
          <svg width="18" height="16" viewBox="0 0 18 16"><path d="M1 8l3-2 3 3 8-8 3 2L7 15Z" fill="#8d929b" /></svg>
        </NavButton>
        <NavButton aria-label="İptal">
          <svg width="18" height="16" viewBox="0 0 18 16"><path d="M2 1l14 14M16 1L2 15" stroke="#8d929b" strokeWidth="4" /></svg>
        </NavButton>
        <NavButton aria-label="Yenile">
          <svg width="20" height="16" viewBox="0 0 20 16">
            <path d="M2 9Q2 3 8 3Q12 3 14 8" stroke="#15428b" strokeWidth="4" fill="none" />
            <path d="M19 2v12H8Z" fill="#15428b" />
          </svg>
        </NavButton>
        <Marker $left={116} $top={1}>2</Marker>
      </Navigator>
      <ScrollBar>
        <ScrollArrow aria-label="Sola kaydır">
          <svg width="5" height="8" viewBox="0 0 5 8"><path d="M5 0v8L0 4Z" fill="#36486e" /></svg>
        </ScrollArrow>
        <Thumb>
          <svg width="8" height="7" viewBox="0 0 8 7"><path d="M.5 0v7M2.500 0v7M5.500 0v7M7.500 0v7" stroke="#5a6f94" /></svg>
        </Thumb>
        <ScrollArrow aria-label="Sağa kaydır">
          <svg width="5" height="8" viewBox="0 0 5 8"><path d="M0 0v8L5 4Z" fill="#36486e" /></svg>
        </ScrollArrow>
      </ScrollBar>
    </GridFooter>
  </GridBox>
);

const DialogPanel = styled(Panel)`
  width: auto;
  height: 43px;
  margin: 0;
  border: 0;
  padding: 0 8px 0 7px;
`;

const DialogGroup = styled(GroupBox)`
  width: 539px;
  margin-bottom: 6px;
`;

const CardDialog = () => (
  <Dialog role="dialog" aria-label="Stok Kart Cari Bilgileri">
    <TitleBar>
      <Butterfly />
      <Caption>Stok Kart Cari Bilgileri</Caption>
      <ControlButtons strong />
    </TitleBar>
    <DialogBody as="div">
      <Toolbar $inner>
        <Group>
          <ToolButton disabled aria-label="İlk"><ArrowIcon kind="first" muted /></ToolButton>
          <ToolButton disabled aria-label="Önceki"><ArrowIcon kind="prev" muted /></ToolButton>
          <ToolButton $hot $focused aria-label="Sonraki"><ArrowIcon kind="next" /></ToolButton>
          <ToolButton aria-label="Son"><ArrowIcon kind="last" /></ToolButton>
          <ToolButton aria-label="Yenile"><RefreshIcon /></ToolButton>
        </Group>
        <Group>
          <ToolButton $width={60} aria-label="Yazdır"><PrintIcon /><Caret /></ToolButton>
          <ToolButton $width={60} aria-label="PDF"><PdfIcon /><Caret /></ToolButton>
          <ToolButton aria-label="Ayarlar"><WrenchIcon /></ToolButton>
        </Group>
        <ToolButton $width={80} aria-label="Çıkış"><ExitIcon /></ToolButton>
        <StatusBlock title="Stok Kart Cari Bilgileri" />
      </Toolbar>
      <DialogGroup>
        <GroupTitle>Stok Bilgileri</GroupTitle>
        <DialogPanel>
          <Label htmlFor="kod2" $width={48}>Stok kodu</Label>
          <Field $width={120}><input id="kod2" defaultValue="50.AST.001" /></Field>
          <Label htmlFor="ad2" $width={39}>Stok adı</Label>
          <Field><input id="ad2" defaultValue="ASTAR BEZİ BASKILI 65" /></Field>
        </DialogPanel>
      </DialogGroup>
      <TabArea>
        <TabStrip role="tablist">
          <Tab role="tab" $active $width={128}>Cari Bilgileri</Tab>
        </TabStrip>
        <TabPanel>
          <Actions>
            <ActionsTitle>İşlemler</ActionsTitle>
            <ActionList>
              <SideItem><Icon size={16}>{listIcons.syncBlue}</Icon>Bu Stok İçin Listeyi Güncelle (Birimsiz)</SideItem>
              <SideItem><Icon size={16}>{listIcons.syncBlue}</Icon>Bütün Stoklar İçin Listeyi Güncelle (Biri...</SideItem>
              <hr />
              <SideItem><Icon size={16}>{listIcons.syncGreen}</Icon>Bu Stok İçin Listeyi Güncelle (Birimli)</SideItem>
              <SideItem><Icon size={16}>{listIcons.syncGreen}</Icon>Bütün Stoklar İçin Listeyi Güncelle (Biri...</SideItem>
            </ActionList>
          </Actions>
          <Splitter><SplitArrow /></Splitter>
          <SupplierGrid />
        </TabPanel>
      </TabArea>
    </DialogBody>
  </Dialog>
);

const App = () => (
  <MainWindow>
    <GlobalStyle />
    <Defs />
    <TitleBar>
      <Butterfly />
      <Caption>Stok Kartı Tanımı</Caption>
      <ControlButtons />
    </TitleBar>
    <Client>
      <MainToolbar />
      <Panel>
        <Label htmlFor="kod" $width={47}>Stok kodu</Label>
        <Field $width={255}>
          <input id="kod" defaultValue="50.AST.001" />
          <PlusSign />
        </Field>
        <Label htmlFor="ad">Adı</Label>
        <Field><input id="ad" defaultValue="ASTAR BEZİ BASKILI 65" /></Field>
      </Panel>
      <Workspace>
        <SideList>
          {sideItems.map(([name, icon]) => (
            <SideItem key={name} $marked={icon === 'codes'} disabled={icon === 'market'}>
              <Icon size={16}>{listIcons[icon]}</Icon>
              {name}
              {icon === 'codes' && <Marker $left={112} $top={0}>1</Marker>}
            </SideItem>
          ))}
        </SideList>
        <Splitter><SplitArrow /></Splitter>
        <FeatureTabs />
      </Workspace>
    </Client>
    <CardDialog />
  </MainWindow>
);

export default App;
